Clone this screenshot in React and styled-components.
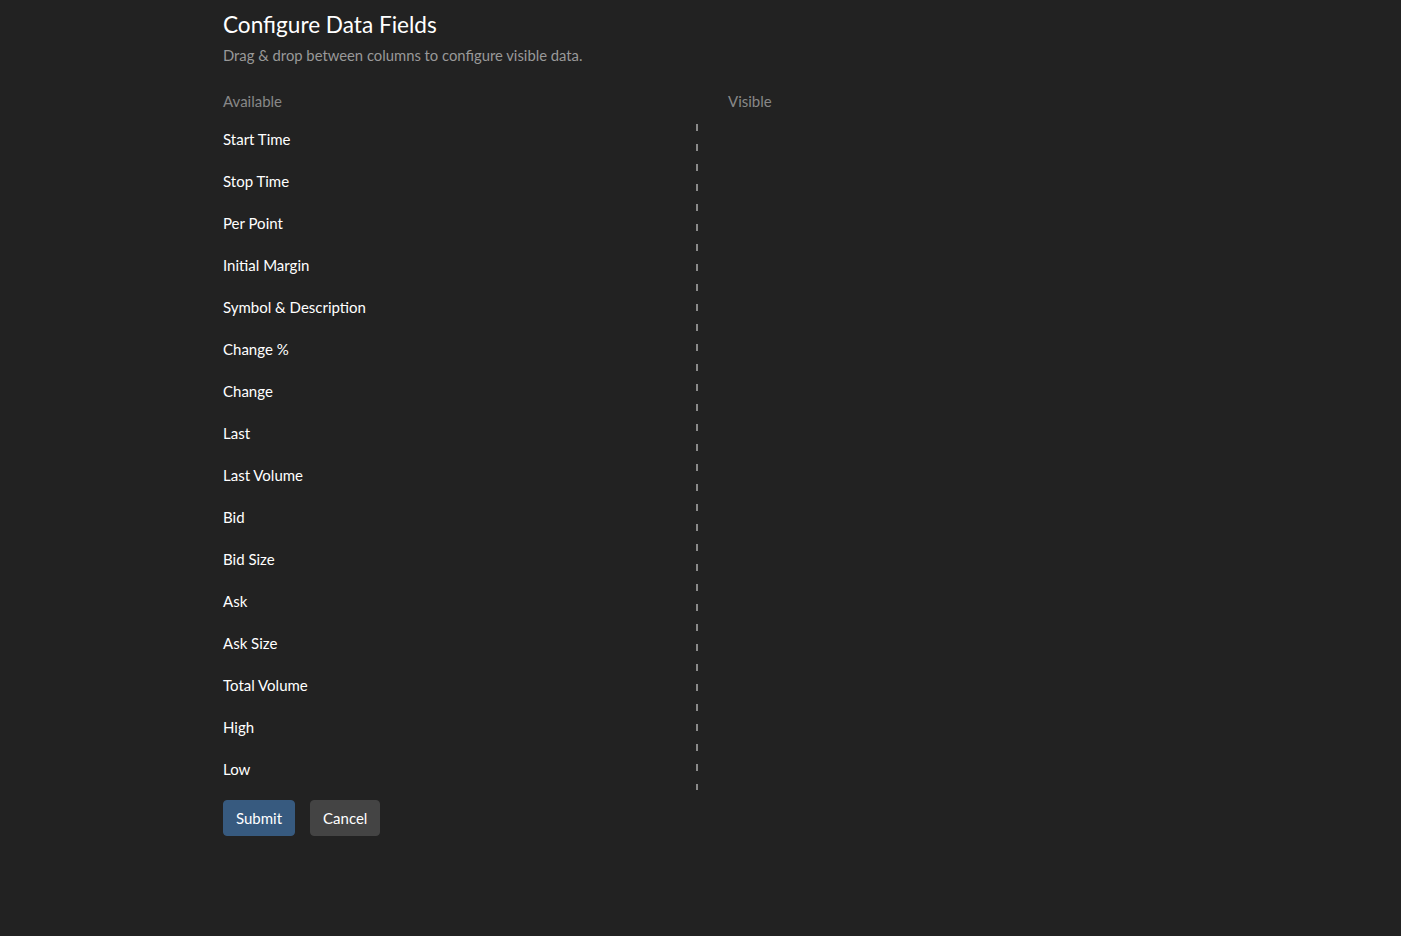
import React from 'react';
import styled, { createGlobalStyle } from 'styled-components';

const GlobalStyle = createGlobalStyle`
  html, body {
    margin: 0;
    padding: 0;
    background: #222222;
    color: #ffffff;
    font-family: Lato, "Open Sans", "Liberation Sans", sans-serif;
    font-size: 15px;
    line-height: 1.5;
  }
`;

const Page = styled.div`
  min-height: 936px;
  background: #222222;
`;

const Container = styled.div`
  width: 955px;
  margin: 0 auto;
  padding-top: 7px;
`;

const Title = styled.h3`
  margin: 0;
  font-size: 22.6px;
  font-weight: 400;
  line-height: 35px;
  color: #ffffff;
`;

const Subtitle = styled.p`
  margin: 0;
  font-size: 14.8px;
  line-height: 26px;
  color: #999999;
`;

const Columns = styled.div`
  display: flex;
  margin-top: 22px;
`;

const Column = styled.div`
  display: flex;
  flex-direction: column;
  width: ${p => (p.$side === 'left' ? '475px' : 'auto')};
  flex: ${p => (p.$side === 'left' ? '0 0 auto' : '1 1 auto')};
  padding-left: ${p => (p.$side === 'left' ? '0' : '30px')};
`;

const ColumnHeader = styled.div`
  font-size: 15px;
  line-height: 22px;
  height: 22px;
  color: #888888;
`;

const List = styled.ul`
  list-style: none;
  margin: 6px 0 0;
  padding: 0;
  min-height: 672px;
  background-image: ${p =>
    p.$divider
      ? 'repeating-linear-gradient(to bottom, transparent 0, transparent 6px, #8a8a8a 6px, #8a8a8a 13px, transparent 13px, transparent 20px)'
      : 'none'};
  background-size: 2px 100%;
  background-position: right top;
  background-repeat: no-repeat;
`;

const Item = styled.li`
  height: 42px;
  display: flex;
  align-items: center;
  font-size: 15px;
  color: #ffffff;
  cursor: grab;
`;

const Actions = styled.div`
  display: flex;
  gap: 15px;
  margin-top: 10px;
`;

const Button = styled.button`
  font-family: inherit;
  font-size: 15px;
  line-height: 22px;
  padding: 6px 12px;
  border: 1px solid ${p => (p.$variant === 'primary' ? '#375a7f' : '#444444')};
  border-radius: 4px;
  background: ${p => (p.$variant === 'primary' ? '#375a7f' : '#444444')};
  color: #ffffff;
  cursor: pointer;
`;

const fields = [
  'Start Time',
  'Stop Time',
  'Per Point',
  'Initial Margin',
  'Symbol & Description',
  'Change %',
  'Change',
  'Last',
  'Last Volume',
  'Bid',
  'Bid Size',
  'Ask',
  'Ask Size',
  'Total Volume',
  'High',
  'Low',
];

export default function App() {
  return (
    <Page>
      <GlobalStyle />
      <Container>
        <Title>Configure Data Fields</Title>
        <Subtitle>Drag &amp; drop between columns to configure visible data.</Subtitle>
        <Columns>
          <Column $side="left">
            <ColumnHeader>Available</ColumnHeader>
            <List $divider>
              {fields.map(f => (
                <Item key={f}>{f}</Item>
              ))}
            </List>
          </Column>
          <Column $side="right">
            <ColumnHeader>Visible</ColumnHeader>
            <List />
          </Column>
        </Columns>
        <Actions>
          <Button $variant="primary">Submit</Button>
          <Button>Cancel</Button>
        </Actions>
      </Container>
    </Page>
  );
}
